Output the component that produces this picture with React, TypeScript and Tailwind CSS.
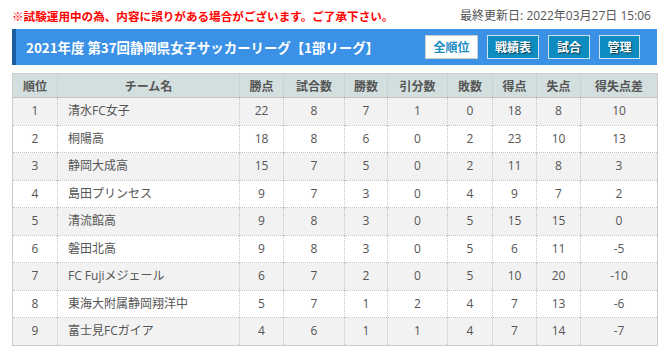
import React from "react";

const rows: [string, string, number, number, number, number, number, number, number, number][] = [
  ["1", "清水FC女子", 22, 8, 7, 1, 0, 18, 8, 10],
  ["2", "桐陽高", 18, 8, 6, 0, 2, 23, 10, 13],
  ["3", "静岡大成高", 15, 7, 5, 0, 2, 11, 8, 3],
  ["4", "島田プリンセス", 9, 7, 3, 0, 4, 9, 7, 2],
  ["5", "清流館高", 9, 8, 3, 0, 5, 15, 15, 0],
  ["6", "磐田北高", 9, 8, 3, 0, 5, 6, 11, -5],
  ["7", "FC Fujiメジェール", 6, 7, 2, 0, 5, 10, 20, -10],
  ["8", "東海大附属静岡翔洋中", 5, 7, 1, 2, 4, 7, 13, -6],
  ["9", "富士見FCガイア", 4, 6, 1, 1, 4, 7, 14, -7],
];

const heads = ["順位", "チーム名", "勝点", "試合数", "勝数", "引分数", "敗数", "得点", "失点", "得失点差"];
const widths = [45, 182, 44, 61, 43, 60, 45, 44, 44, 77];

export default function App() {
  return (
    <div
      className="w-[664px] h-[352px] bg-white pl-3 pr-[7px] pt-[6px] overflow-hidden"
      style={{ fontFamily: '"Open Sans", "Noto Sans CJK JP", sans-serif' }}
    >
      <div className="flex items-center justify-between h-[20px] pr-[6px]">
        <div className="text-[11.6px] font-bold text-[#ff0000] leading-[20px]" style={{ fontFamily: '"Noto Sans CJK JP", sans-serif' }}>
          ※試験運用中の為、内容に誤りがある場合がございます。ご了承下さい。
        </div>
        <div className="text-[12px] text-[#555] leading-[20px]">最終更新日: 2022年03月27日 15:06</div>
      </div>
      <div className="mt-[3px] h-[36px] bg-[#3a91e6] border-l-4 border-[#1a5ea6] flex items-center pl-[10px] pr-[17px]">
        <div className="text-[13.4px] font-bold text-white flex-1" style={{ fontFamily: '"Noto Sans CJK JP", sans-serif' }}>
          2021年度 第37回静岡県女子サッカーリーグ【1部リーグ】
        </div>
        <div className="flex items-center gap-[9px]" style={{ fontFamily: '"Noto Sans CJK JP", sans-serif' }}>
          <div className="h-[24px] w-[53px] bg-white border border-[#cfcfcf] text-[#1a8cc4] text-[12px] font-bold flex items-center justify-center">全順位</div>
          <div className="h-[24px] w-[52px] bg-[#0c8cc0] border border-[#cfe3ef] text-white text-[12px] font-bold flex items-center justify-center [text-shadow:1px_1px_1px_rgba(0,0,0,0.6)]">戦績表</div>
          <div className="h-[24px] w-[42px] bg-[#0c8cc0] border border-[#cfe3ef] text-white text-[12px] font-bold flex items-center justify-center [text-shadow:1px_1px_1px_rgba(0,0,0,0.6)]">試合</div>
          <div className="h-[24px] w-[41px] bg-[#0c8cc0] border border-[#cfe3ef] text-white text-[12px] font-bold flex items-center justify-center [text-shadow:1px_1px_1px_rgba(0,0,0,0.6)]">管理</div>
        </div>
      </div>
      <table className="mt-[8px] w-[645px] table-fixed border-collapse border border-[#cccccc] text-[12px] text-[#555]">
        <colgroup>
          {widths.map((w, i) => (
            <col key={i} style={{ width: w }} />
          ))}
        </colgroup>
        <thead>
          <tr className="bg-[#d3dfdf] h-[24px] border-b border-[#c4c4c4]">
            {heads.map((h, i) => (
              <th
                key={i}
                className="font-bold text-center p-0 border-l border-dotted border-[#c4c4c4] first:border-l-0"
                style={{ fontFamily: '"Noto Sans CJK JP", sans-serif' }}
              >
                {h}
              </th>
            ))}
          </tr>
        </thead>
        <tbody>
          {rows.map((r, ri) => (
            <tr key={ri} className={`h-[27.5px] border-t border-dotted border-[#c4c4c4] ${ri % 2 === 0 ? "bg-[#f2f2f2]" : "bg-white"}`}>
              {r.map((c, ci) => (
                <td
                  key={ci}
                  className={`p-0 border-l border-dotted border-[#c4c4c4] first:border-l-0 ${ci === 1 ? "text-left pl-[10px]" : "text-center"}`}
                >
                  {c}
                </td>
              ))}
            </tr>
          ))}
        </tbody>
      </table>
    </div>
  );
}
